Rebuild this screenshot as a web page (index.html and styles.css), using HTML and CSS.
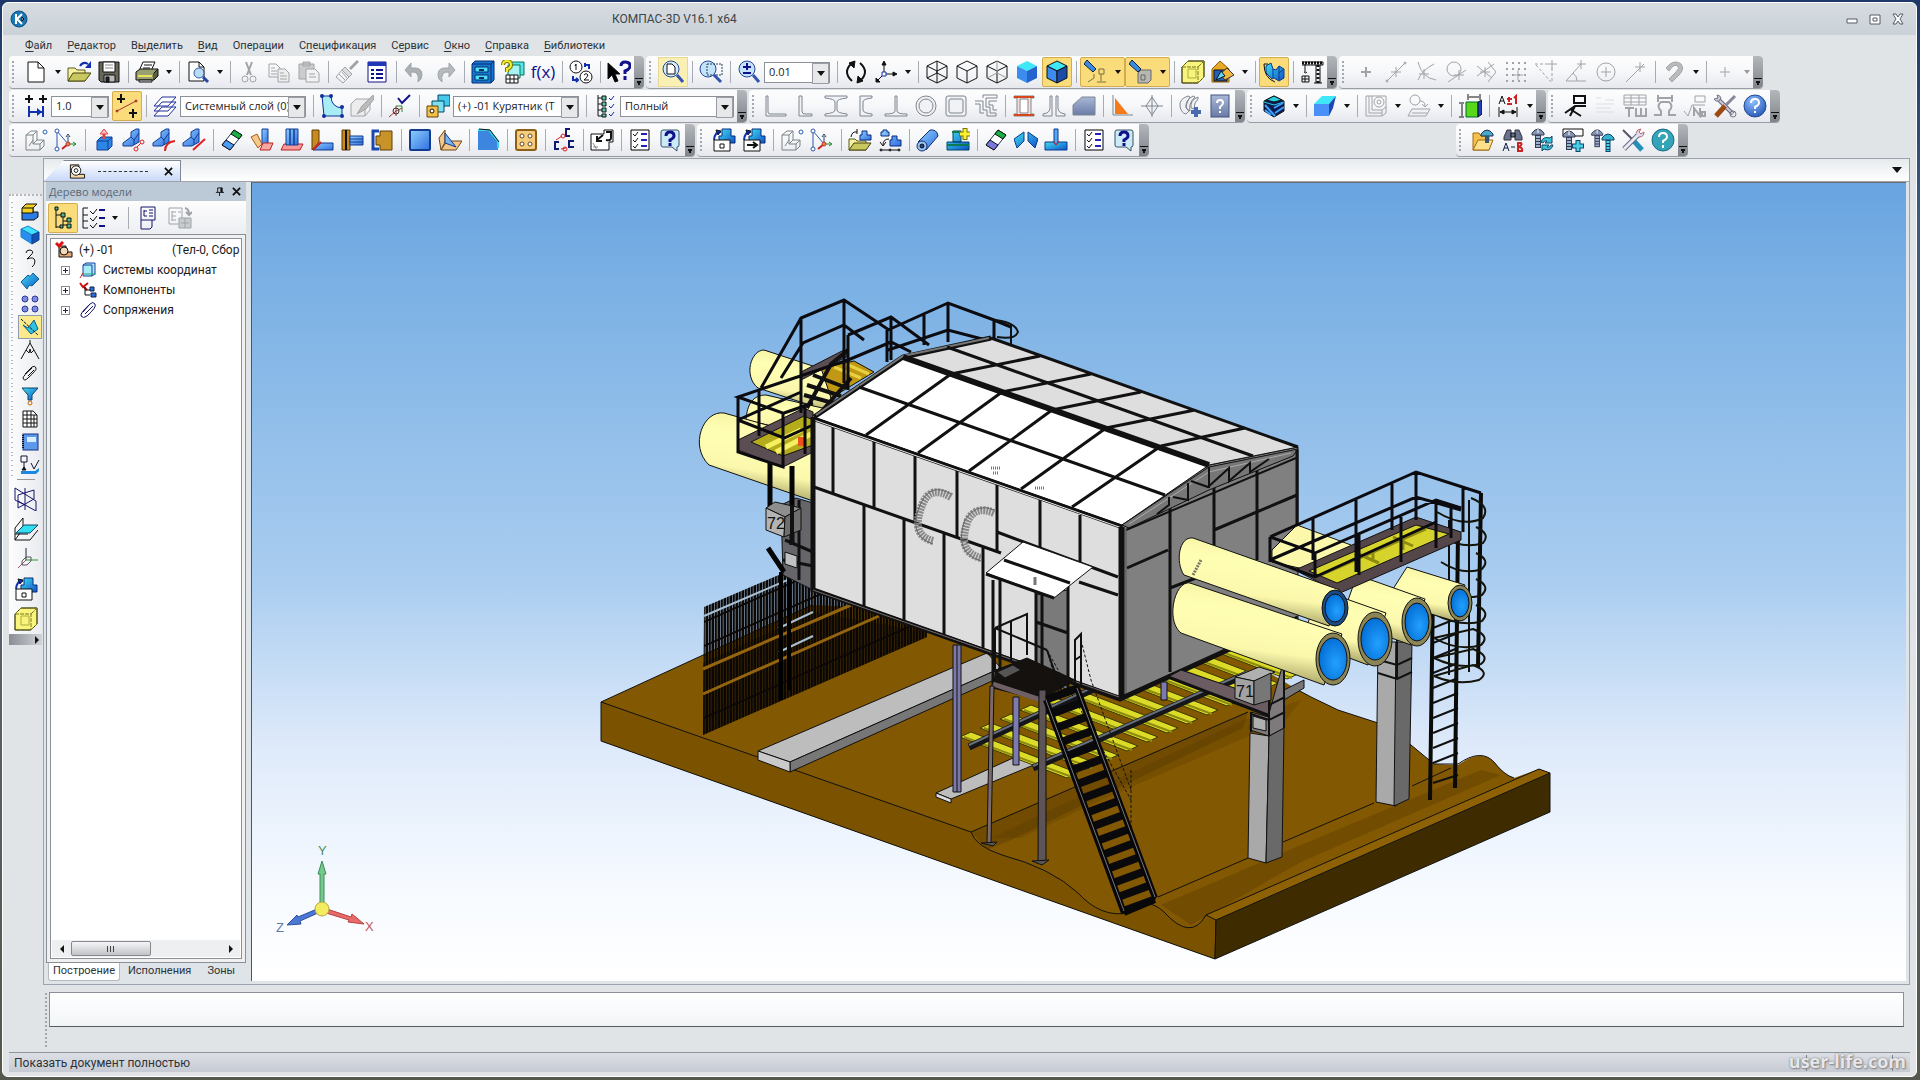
FILE: index.html
```html
<!DOCTYPE html>
<html lang="ru">
<head>
    <meta charset="UTF-8">
    <meta name="viewport" content="width=device-width, initial-scale=1.0">
    <title>КОМПАС-3D V16.1 x64</title>
    <link rel="stylesheet" href="styles.css">
</head>
<body>

<!-- общие градиенты и повторяющиеся значки -->
<svg class="defs" width="0" height="0" aria-hidden="true">
    <defs>
        <linearGradient id="blue" x1="0" y1="0" x2="1" y2="1"><stop offset="0" stop-color="#8fd0ff"/><stop offset="1" stop-color="#2f6fe0"/></linearGradient>
        <linearGradient id="cyan" x1="0" y1="0" x2="1" y2="1"><stop offset="0" stop-color="#3fe0f0"/><stop offset="1" stop-color="#1050c8"/></linearGradient>
        <linearGradient id="steel" x1="0" y1="0" x2="0" y2="1"><stop offset="0" stop-color="#a9b8d8"/><stop offset="1" stop-color="#6a7ba6"/></linearGradient>
        <radialGradient id="ball" cx=".4" cy=".3" r=".8"><stop offset="0" stop-color="#8cc0ff"/><stop offset="1" stop-color="#2050b0"/></radialGradient>
        <linearGradient id="pipe" x1="0.6" y1="0" x2="0.38" y2="1"><stop offset="0" stop-color="#f4f0a0"/><stop offset=".3" stop-color="#ffffb4"/><stop offset=".65" stop-color="#fbf8ac"/><stop offset="1" stop-color="#8f8a50"/></linearGradient>
        <radialGradient id="bore" cx=".6" cy=".6" r=".7"><stop offset="0" stop-color="#22a0ff"/><stop offset="1" stop-color="#0068d0"/></radialGradient>
        <pattern id="pickets" width="6" height="24" patternUnits="userSpaceOnUse" patternTransform="skewY(-24)"><path d="M1 0V24" stroke="#0b0704" stroke-width="2"/><path d="M4 0V24" stroke="#0b0704" stroke-width="3"/><path d="M0 23H6" stroke="#0b0704" stroke-width="2"/></pattern>
        <symbol id="i-plan" viewBox="0 0 24 24"><path d="M2 7L7 3H13V12H20V18L16 22H2ZM2 7H9V16H16V22M9 7L13 3M9 16L13 12M16 16L20 12M5 18L9 12" stroke="#7d8388"/><circle cx="21" cy="4" r="2" stroke="#2b62b8"/></symbol>
        <symbol id="i-axes3" viewBox="0 0 24 24"><path d="M3 3L14 16M3 4V21" stroke="#3158b0"/><circle cx="3" cy="3" r="2" fill="#fff" stroke="#3158b0"/><circle cx="3" cy="21" r="2" fill="#fff" stroke="#3158b0"/><path d="M14 16V8M12 9L14 6L16 9" stroke="#246"/><path d="M14 16L8 21" stroke="#c22" stroke-width="2"/><path d="M14 16H21M19 14L22 16L19 18" stroke="#1a8a2a"/><circle cx="14" cy="16" r="2" fill="#f0882a" stroke="#b34"/></symbol>
        <symbol id="i-list" viewBox="0 0 24 24"><path d="M3 2H21V22H3Z" fill="#fff" stroke="#000"/><path d="M5 6L7 8L10 4M5 12L7 14L10 10M5 18L7 20L10 16"/><path d="M13 6H19M13 12H19M13 18H19" stroke="#2222b8" stroke-width="2"/></symbol>
        <symbol id="i-hint" viewBox="0 0 24 24"><path d="M3 4Q3 2 5 2H19Q21 2 21 4V17Q21 19 19 19V23L14 19H5Q3 19 3 17Z" fill="#cdeaf8" stroke="#356"/><path d="M8 8Q8 4 12 4Q16 4 16 8Q16 10 12 12V14" stroke="#10108a" stroke-width="3"/><path d="M12 15V18" stroke="#10108a" stroke-width="3"/></symbol>
        <symbol id="i-bolt" viewBox="0 0 24 24"><path d="M4 7Q10 -1 16 7V9H4Z" fill="#8492b0" stroke="#333a55"/><path d="M10 3V7" stroke="#fff"/><path d="M10 9V22" stroke="#333a55" stroke-width="6"/><path d="M10 10V21" stroke="#9fb0cc" stroke-width="4" stroke-dasharray="2 1"/></symbol>
        <symbol id="i-solid" viewBox="0 0 24 24"><path d="M2 12Q3 3 9 4" stroke="#1030b0" stroke-width="2"/><path d="M4 2L9 3L6 7Z" fill="#1030b0"/><path d="M10 1H19V8H23V15H7V8H10Z" fill="url(#cyan)" stroke="#0a2a80"/><path d="M2 12H18V23H2Z" fill="#fff"/></symbol>
        <symbol id="i-pane" viewBox="0 0 24 24"><path d="M1 7L7 1H23V17L17 23H1Z" fill="#f8f47c"/><path d="M1 7L7 1H23V17L17 23H1ZM1 7H17V23M17 7L23 1" stroke="#77771c" stroke-dasharray="4 1"/><path d="M7 9V18H15V9Z" stroke="#b0ac40"/></symbol>
        <symbol id="i-help" viewBox="0 0 24 24"><circle cx="12" cy="12" r="11" fill="url(#ball)" stroke="#234a94"/><path d="M8 9Q8 5 12 5Q16 5 16 9Q16 11 12 13V15" stroke="#fff" stroke-width="2"/><path d="M12 17V19" stroke="#fff" stroke-width="2"/></symbol>
        <symbol id="i-wire" viewBox="0 0 24 24"><path d="M12 1L22 6V18L12 23L2 18V6ZM2 6L12 11L22 6M12 11V23"/></symbol>
        <g id="slat"><path d="M0 0L107 41L118 36L11 -5Z" fill="#dcdc28" stroke="#3a3800"/><path d="M4 0L112 40" stroke="#8c8a10" stroke-width="2"/></g>
    </defs>
</svg>

<div class="window">
    <header class="titlebar">
        <svg class="logo" viewBox="0 0 18 18"><circle cx="9" cy="9" r="8" fill="#1c78b4" stroke="#0d4f80"/><path d="M6 4V14M12 4L7 9L12 14" stroke="#fff" stroke-width="2"/><path d="M12 7L14 9L12 11Z" fill="#fff"/></svg>
        <h1>КОМПАС-3D V16.1 x64</h1>
        <div class="window-buttons">
            <button aria-label="Свернуть"><svg viewBox="0 0 12 12"><path d="M1 6H11V10H1Z" fill="#fff"/></svg></button>
            <button aria-label="Развернуть"><svg viewBox="0 0 12 12"><path d="M1 2H11V11H1Z" fill="#fff"/><path d="M4 5H8V8H4Z"/></svg></button>
            <button aria-label="Закрыть"><svg viewBox="0 0 12 12"><path d="M1 1H4L6 4L8 1H11L8 6L11 11H8L6 8L4 11H1L4 6Z" fill="#fff"/></svg></button>
        </div>
    </header>

    <nav class="menu">
        <a href="#"><u>Ф</u>айл</a>
        <a href="#"><u>Р</u>едактор</a>
        <a href="#">В<u>ы</u>делить</a>
        <a href="#"><u>В</u>ид</a>
        <a href="#">Опера<u>ц</u>ии</a>
        <a href="#">С<u>п</u>ецификация</a>
        <a href="#">С<u>е</u>рвис</a>
        <a href="#"><u>О</u>кно</a>
        <a href="#"><u>С</u>правка</a>
        <a href="#"><u>Б</u>иблиотеки</a>
    </nav>

    <!-- ряд 1 -->
    <div class="toolbar-row">
        <div class="toolbar">
            <i class="grip"></i>
            <button class="tool" aria-label="Создать"><svg viewBox="0 0 24 24"><path d="M4 2H14L20 8V22H4Z" fill="#fff"/><path d="M14 2V8H20"/></svg></button><button class="caret" aria-label="Список"></button>
            <button class="tool" aria-label="Открыть"><svg viewBox="0 0 24 24"><path d="M1 8H8L10 10H18V21H1Z" fill="#f4f2a0" stroke="#5a5a18"/><path d="M1 21L6 13H24L18 21Z" fill="#c9c860" stroke="#44440c"/><path d="M13 6Q16 1 21 4" stroke="#1030b0" stroke-width="2"/><path d="M24 1V8H18Z" fill="#1030b0" stroke="none"/></svg></button>
            <button class="tool" aria-label="Сохранить"><svg viewBox="0 0 24 24"><path d="M2 2H22V22H4L2 20Z" fill="#66665a"/><path d="M6 2H18V12H6Z" fill="#fff"/><path d="M8 5H16M8 8H16" stroke="#888"/><path d="M7 15H18V22H7Z" fill="#bbb"/><path d="M9 17H12V22H9Z" fill="#222"/></svg></button>
            <i class="sep"></i>
            <button class="tool" aria-label="Печать"><svg viewBox="0 0 24 24"><path d="M8 2H20L16 11H4Z" fill="#fff"/><path d="M9 5H17M8 8H15"/><path d="M1 12L5 9H23L19 13V20H1Z" fill="#9a9f72"/><path d="M19 13L23 9V16L19 20" fill="#5c6040"/><path d="M3 16H17" stroke="#e8e460" stroke-width="2"/><path d="M4 20H17V22H4Z" fill="#ddd"/></svg></button><button class="caret" aria-label="Список"></button>
            <i class="sep"></i>
            <button class="tool" aria-label="Просмотр"><svg viewBox="0 0 24 24"><path d="M3 2H13L18 7V21H3Z" fill="#fff"/><path d="M13 2V7H18"/><circle cx="13" cy="13" r="5" fill="#b8dcf8" stroke="#345a9c"/><path d="M17 17L22 22" stroke="#2848a0" stroke-width="3"/></svg></button><button class="caret" aria-label="Список"></button>
            <i class="sep"></i>
            <button class="tool off" aria-label="Вырезать"><svg viewBox="0 0 24 24"><path d="M9 2L14 15M15 2L10 15" stroke-width="2"/><circle cx="8" cy="19" r="3"/><circle cx="16" cy="19" r="3"/></svg></button>
            <button class="tool off" aria-label="Копировать"><svg viewBox="0 0 24 24"><path d="M2 4H9L13 8V17H2ZM4 8H8M4 11H10M4 14H10"/><path d="M11 9H18L22 13V22H11Z" fill="#eee"/><path d="M13 13H17M13 16H20M13 19H20"/></svg></button>
            <button class="tool off" aria-label="Вставить"><svg viewBox="0 0 24 24"><path d="M2 4H17V19H2ZM6 2H13V6H6Z" fill="#ccc"/><path d="M9 9H18L22 13V22H9Z" fill="#f2f2f2"/><path d="M12 14H18M12 17H19"/></svg></button>
            <i class="sep"></i>
            <button class="tool off" aria-label="Копировать свойства"><svg viewBox="0 0 24 24"><path d="M23 1L15 9" stroke-width="3"/><path d="M10 7L17 14L14 17L7 10Z" fill="#ddd"/><path d="M7 10L1 17L8 23L14 17M4 14L10 20M7 12L12 18"/></svg></button>
            <button class="tool" aria-label="Свойства"><svg viewBox="0 0 24 24"><path d="M3 2H21V22H3Z" fill="#fff" stroke="#10108a"/><path d="M3 4H21" stroke="#2038b8" stroke-width="4"/><path d="M6 10H9M6 14H9M6 18H9M11 10H18M11 14H18M11 18H18" stroke="#10108a" stroke-width="2"/></svg></button>
            <i class="sep"></i>
            <button class="tool off" aria-label="Отменить"><svg viewBox="0 0 24 24"><path d="M8 8H12Q19 8 19 15Q19 19 15 22Q17 11 8 12V17L2 10L8 3Z" fill="#aab0b4"/></svg></button>
            <button class="tool off" aria-label="Повторить"><svg viewBox="0 0 24 24"><path d="M16 8H12Q5 8 5 15Q5 19 9 22Q7 11 16 12V17L22 10L16 3Z" fill="#b4babe"/></svg></button>
            <i class="sep"></i>
            <button class="tool" aria-label="Менеджер библиотек"><svg viewBox="0 0 24 24"><path d="M1 4L4 1H23V20L20 23H1Z" fill="#1478d0" stroke="#0a2a70"/><path d="M1 4H20V23M20 4L23 1" stroke="#0a2a70"/><path d="M4 7H17V12H4ZM4 15H17V20H4Z" fill="#4fe0f4" stroke="#062c6c"/><path d="M8 10H13M8 18H13" stroke="#062c6c" stroke-width="2"/></svg></button>
            <button class="tool" aria-label="Менеджер документа"><svg viewBox="0 0 24 24"><path d="M10 2H23V15H10Z" fill="#56e4ea" stroke="#075"/><path d="M7 5H19V18H7Z" fill="#a8f4f4" stroke="#075"/><path d="M2 5Q2 1 6 1Q10 1 10 5Q10 8 6 9V12" stroke="#7a7400" stroke-width="4"/><path d="M2 5Q2 1 6 1Q10 1 10 5Q10 8 6 9V12" stroke="#f4ec30" stroke-width="2"/><path d="M5 15H17V23H5ZM5 19H17M9 15V23M13 15V23" fill="#fff"/></svg></button>
            <button class="tool" aria-label="Переменные"><span class="fx">f(x)</span></button>
            <i class="sep"></i>
            <button class="tool" aria-label="Перестроить"><svg viewBox="0 0 24 24"><circle cx="7" cy="7" r="6" fill="#fff"/><circle cx="17" cy="17" r="6" fill="#fff"/><path d="M6 6L7 4V10M15 15Q17 12 19 15Q18 18 15 20H20"/><path d="M16 5H20V9M16 3V7M4 16V20H9M7 18L9 20L7 22" stroke="#1030b0" stroke-width="2"/></svg></button>
            <i class="sep"></i>
            <button class="tool" aria-label="Что это такое"><svg viewBox="0 0 24 24"><path d="M1 3V19L5 15L8 22L11 21L8 14H13Z" fill="#000"/><path d="M14 6Q14 2 18 2Q23 2 23 6Q23 9 18 11V14" stroke="#10108a" stroke-width="3"/><path d="M18 16V20" stroke="#10108a" stroke-width="3"/></svg></button>
            <button class="cap" aria-label="Параметры панели"></button>
        </div>
        <div class="toolbar">
            <i class="grip"></i>
            <button class="tool hover" aria-label="Показать все"><svg viewBox="0 0 24 24"><circle cx="10" cy="9" r="8" fill="#d4ecfa" stroke="#24489a"/><path d="M6 4H11L14 7V14H6Z" fill="#fff"/><path d="M16 15L22 22" stroke="#3054b0" stroke-width="3"/></svg></button>
            <i class="sep"></i>
            <button class="tool" aria-label="Увеличить рамкой"><svg viewBox="0 0 24 24"><circle cx="9" cy="9" r="8" fill="#c4e2fa" stroke="#24489a"/><path d="M8 4H23V15H8Z" stroke="#245" stroke-dasharray="2 1"/><path d="M15 15L22 22" stroke="#3054b0" stroke-width="3"/></svg></button>
            <i class="sep"></i>
            <button class="tool" aria-label="Масштаб"><svg viewBox="0 0 24 24"><circle cx="10" cy="9" r="8" fill="#c4e2fa" stroke="#24489a"/><path d="M6 7H14M10 3V10M6 13H14" stroke="#10108a" stroke-width="2"/><path d="M16 15L22 22" stroke="#3054b0" stroke-width="3"/></svg></button>
            <span class="combo combo-scale"><select aria-label="Текущий масштаб"><option>0.01</option></select></span>
            <i class="sep"></i>
            <button class="tool" aria-label="Повернуть"><svg viewBox="0 0 24 24"><path d="M8 21Q-2 12 8 3M16 3Q26 12 16 21" stroke-width="2"/><path d="M5 3L11 1L10 8ZM19 21L13 23L14 16Z" fill="#111"/></svg></button>
            <button class="tool" aria-label="Ориентация"><svg viewBox="0 0 24 24"><path d="M10 12V2M10 14L2 22M12 14H22"/><path d="M8 5L10 1L12 5ZM19 12L23 14L19 16ZM2 18V22H6Z" fill="#111"/><path d="M8 12H12V16H8Z" fill="#fff" stroke="#1030b0"/></svg></button><button class="caret" aria-label="Список"></button>
            <i class="sep"></i>
            <button class="tool" aria-label="Каркас"><svg viewBox="0 0 24 24"><use href="#i-wire"/><path d="M12 1V13L2 18M12 13L22 18"/></svg></button>
            <button class="tool" aria-label="Без невидимых линий"><svg viewBox="0 0 24 24"><use href="#i-wire"/></svg></button>
            <button class="tool" aria-label="Невидимые линии тонкие"><svg viewBox="0 0 24 24"><use href="#i-wire"/><path d="M12 1V13L2 18M12 13L22 18" stroke="#999"/></svg></button>
            <button class="tool" aria-label="Полутоновое"><svg viewBox="0 0 24 24"><path d="M2 6L12 1L22 6L12 11Z" fill="#3fe8f8" stroke="none"/><path d="M2 6L12 11V23L2 18Z" fill="#3c8cf0" stroke="none"/><path d="M22 6L12 11V23L22 18Z" fill="#2464cc" stroke="none"/></svg></button>
            <button class="tool on" aria-label="Полутоновое с каркасом"><svg viewBox="0 0 24 24"><path d="M2 6L12 1L22 6L12 11Z" fill="#3fe8f8"/><path d="M2 6L12 11V23L2 18Z" fill="#3c8cf0"/><path d="M22 6L12 11V23L22 18Z" fill="#1c4ca8"/></svg></button>
            <i class="sep"></i>
            <span class="pair on"><button class="tool" aria-label="Видимость"><svg viewBox="0 0 24 24"><path d="M3 0L12 9L9 12L0 4Z" fill="#3a8ae0" stroke="#124"/><path d="M15 9H20V14H15ZM17 14V21M13 22H22M10 14V18L4 22" stroke="#777040"/></svg></button><button class="caret" aria-label="Список"></button></span>
            <span class="pair on"><button class="tool" aria-label="Упрощения"><svg viewBox="0 0 24 24"><path d="M3 0L12 9L9 12L0 4Z" fill="#3a8ae0" stroke="#124"/><path d="M9 13L12 10H22V20L19 23H9Z" fill="#b8b8b0" stroke="#666"/><path d="M12 15H16V20H12Z" stroke="#666"/></svg></button><button class="caret" aria-label="Список"></button></span>
            <i class="sep"></i>
            <button class="tool" aria-label="Скрыть"><svg viewBox="0 0 24 24"><use href="#i-pane"/></svg></button>
            <button class="tool" aria-label="Сечение"><svg viewBox="0 0 24 24"><path d="M1 9L9 1L18 9V22H1Z" fill="#e8a828" stroke="#8a5c08"/><path d="M3 10H16V21H3Z" fill="#2460c0"/><path d="M16 8L23 15L14 20L9 14Z" fill="#f0b840" stroke="#333"/><path d="M5 20L10 11L14 16Z" fill="#5fd8f0"/></svg></button><button class="caret" aria-label="Список"></button>
            <i class="sep"></i>
            <button class="tool on" aria-label="Перестроение"><svg viewBox="0 0 24 24"><path d="M4 6L9 3L11 9L14 10L17 6L22 9V18L17 21L12 18L10 19L4 13Z" fill="url(#cyan)" stroke="#0a3a90"/><path d="M11 9V18M17 6V13L22 9M17 13V20" stroke="#0a3a90"/><path d="M2 4Q2 18 13 22M2 4H6"/></svg></button>
            <i class="sep"></i>
            <button class="tool" aria-label="Кран"><svg viewBox="0 0 24 24"><path d="M2 2H23V5H2M5 4V12M4 12Q6 14 7 12" /><path d="M2 3H23" stroke-width="3" stroke-dasharray="2 1"/><path d="M16 5V23M20 5V23M14 23H22"/><path d="M18 5V23" stroke-width="3" stroke-dasharray="2 2"/><path d="M2 16H9V22H2ZM2 19H9M5 16V22"/></svg></button>
            <button class="cap" aria-label="Параметры панели"></button>
        </div>
        <div class="toolbar">
            <i class="grip"></i>
            <button class="tool off" aria-label="Ближайшая точка"><svg viewBox="0 0 24 24"><path d="M12 7V17M7 12H17" stroke-width="2"/></svg></button>
            <button class="tool off" aria-label="Середина"><svg viewBox="0 0 24 24"><path d="M2 22L22 2M12 7V17M7 12H17"/><circle cx="21" cy="3" r="1"/><circle cx="3" cy="21" r="1"/></svg></button>
            <button class="tool off" aria-label="Пересечение"><svg viewBox="0 0 24 24"><path d="M4 2Q8 18 22 20M20 4Q8 10 4 20M10 9V19M5 14H15"/></svg></button>
            <button class="tool off" aria-label="Касание"><svg viewBox="0 0 24 24"><circle cx="10" cy="9" r="7"/><path d="M4 22L22 10M15 10V20M10 15H20"/></svg></button>
            <button class="tool off" aria-label="Нормаль"><svg viewBox="0 0 24 24"><path d="M3 6L18 18M3 16L20 4M14 2L22 12L14 22M11 7V17M6 12H16"/></svg></button>
            <button class="tool off" aria-label="По сетке"><svg viewBox="0 0 24 24"><path d="M2 3H23M2 9H23M2 15H23M2 21H23" stroke-width="2" stroke-dasharray="2 4"/><path d="M14 10V20M9 15H19"/></svg></button>
            <button class="tool off" aria-label="Выравнивание"><svg viewBox="0 0 24 24"><path d="M1 4H13M18 8V22M2 5L17 22" stroke-dasharray="3 2"/><path d="M18 0V9M13 4H23"/></svg></button>
            <button class="tool off" aria-label="Угловая"><svg viewBox="0 0 24 24"><path d="M2 21H22M2 21L17 4M9 13Q13 16 13 21M17 0V9M13 4H22"/></svg></button>
            <button class="tool off" aria-label="Центр"><svg viewBox="0 0 24 24"><circle cx="12" cy="12" r="9"/><path d="M12 7V17M7 12H17"/></svg></button>
            <button class="tool off" aria-label="Точка на кривой"><svg viewBox="0 0 24 24"><path d="M2 22L20 4M16 2V12M11 7H21"/></svg></button>
            <i class="sep"></i>
            <button class="tool off" aria-label="Привязки"><svg viewBox="0 0 24 24"><path d="M4 8L8 4Q14 0 19 4Q23 9 17 15L10 22L7 19L14 12Q18 8 16 6Q13 4 10 7L7 11Z" fill="#bbb"/></svg></button><button class="caret" aria-label="Список"></button>
            <i class="sep"></i>
            <button class="tool off" aria-label="Точка"><svg viewBox="0 0 24 24"><path d="M12 7V17M7 12H17"/></svg></button><button class="caret off" aria-label="Список"></button>
            <button class="cap" aria-label="Параметры панели"></button>
        </div>
    </div>

    <!-- ряд 2 -->
    <div class="toolbar-row">
        <div class="toolbar">
            <i class="grip"></i>
            <button class="tool" aria-label="Шаг курсора"><svg viewBox="0 0 24 24"><path d="M5 1V9M1 5H9M19 1V9M15 5H23" stroke-width="2"/><path d="M5 12V23M19 12V23M5 18H18" stroke="#1030b0" stroke-width="2"/><path d="M13 14L18 18L13 22Z" fill="#1030b0" stroke="none"/></svg></button>
            <span class="combo combo-step"><select aria-label="Шаг"><option>1.0</option></select></span>
            <button class="tool on" aria-label="Запретить привязки"><svg viewBox="0 0 24 24"><path d="M6 0V9M2 5H10M18 15V24M14 19H22" stroke-width="2"/><path d="M2 17L21 7" stroke="#a33"/><circle cx="2" cy="17" r="1" fill="#a33" stroke="#a33"/><circle cx="21" cy="7" r="1" fill="#a33" stroke="#a33"/></svg></button>
            <i class="sep"></i>
            <button class="tool" aria-label="Слои"><svg viewBox="0 0 24 24"><path d="M1 22L9 13H23L15 22ZM1 17L9 8H23L15 17ZM1 12L9 3H23L15 12Z" fill="#fff" stroke="#1c2e98"/></svg></button>
            <span class="combo combo-layer"><select aria-label="Слой"><option>Системный слой (0)</option></select></span>
            <i class="sep"></i>
            <button class="tool" aria-label="Эскиз"><svg viewBox="0 0 24 24"><path d="M2 2H11Q11 13 22 14V22H4Z" fill="#a8ecf4" stroke="#10309a"/><g fill="#10309a" stroke="none"><circle cx="2" cy="2" r="2"/><circle cx="11" cy="2" r="2"/><circle cx="22" cy="13" r="2"/><circle cx="22" cy="22" r="2"/><circle cx="4" cy="22" r="2"/></g></svg></button>
            <button class="tool off" aria-label="Редактировать"><svg viewBox="0 0 24 24"><path d="M1 10L6 5H20L15 10V22H1Z" fill="#ececec"/><path d="M20 5V16L15 22"/><path d="M23 1L12 12L7 20L16 15L24 5Z" fill="#bbb"/></svg></button>
            <i class="sep"></i>
            <button class="tool" aria-label="ЛСК"><svg viewBox="0 0 24 24"><path d="M8 12V22M8 17L1 23M8 17L14 14" stroke="#a33"/><path d="M8 12H14V18" stroke="#2a8a2a"/><circle cx="8" cy="17" r="3" stroke="#333"/><path d="M10 4L14 9L22 1" stroke="#10108a" stroke-width="2"/></svg></button>
            <i class="sep"></i>
            <button class="tool" aria-label="Исполнение"><svg viewBox="0 0 24 24"><path d="M12 1H24V12H12Z" fill="#46c8ea" stroke="#046"/><path d="M6 7H18V18H6Z" fill="#7ce0f0" stroke="#046"/><path d="M1 12H12V23H1Z" fill="#f4c04a" stroke="#640"/><circle cx="6" cy="17" r="2" fill="#fff"/></svg></button>
            <span class="combo combo-part"><select aria-label="Исполнение"><option>(+) -01 Курятник (Т</option></select></span>
            <i class="sep"></i>
            <button class="tool" aria-label="Состав"><svg viewBox="0 0 24 24"><path d="M5 1V22M5 4H9M5 10H9M5 16H9M5 22H9"/><path d="M9 2H13V6H9ZM9 8H13V12H9ZM9 14H13V18H9ZM9 20H13V23H9Z" fill="#58c8b0"/><path d="M16 4L18 6L21 2M16 20L18 22L21 18M16 12L18 14L21 10" stroke="#1030b0"/></svg></button>
            <span class="combo combo-full"><select aria-label="Состояние"><option>Полный</option></select></span>
            <button class="cap" aria-label="Параметры панели"></button>
        </div>
        <div class="toolbar">
            <i class="grip"></i>
            <button class="tool dim" aria-label="Уголок"><svg viewBox="0 0 24 24"><path d="M2 2H4V18Q4 20 6 20H22V22H2Z"/></svg></button>
            <button class="tool dim" aria-label="Уголок неравный"><svg viewBox="0 0 24 24"><path d="M5 2H8V17Q8 20 11 20H18V22H5Z"/></svg></button>
            <button class="tool dim" aria-label="Двутавр"><svg viewBox="0 0 24 24"><path d="M1 2H23V4Q13 5 13 8V16Q13 19 23 20V22H1V20Q11 19 11 16V8Q11 5 1 4Z"/></svg></button>
            <button class="tool dim" aria-label="Швеллер"><svg viewBox="0 0 24 24"><path d="M18 2H6V22H18V20Q9 19 9 16V8Q9 5 18 4Z"/></svg></button>
            <button class="tool dim" aria-label="Тавр"><svg viewBox="0 0 24 24"><path d="M11 2H13V17Q13 20 23 20V22H1V20Q11 20 11 17Z"/></svg></button>
            <button class="tool dim" aria-label="Труба"><svg viewBox="0 0 24 24"><circle cx="12" cy="12" r="10"/><circle cx="12" cy="12" r="7"/></svg></button>
            <button class="tool dim" aria-label="Профиль"><svg viewBox="0 0 24 24"><rect x="2" y="2" width="20" height="20" rx="2"/><rect x="5" y="5" width="14" height="14" rx="2"/></svg></button>
            <button class="tool dim" aria-label="Гнутый профиль"><svg viewBox="0 0 24 24"><path d="M1 7H9V16H13V22H22V19H16V13H12V4H23V1H9V4" fill="none"/><path d="M1 10H6V19H10M23 7H15V11H19V16H23" fill="none"/></svg></button>
            <i class="sep"></i>
            <button class="tool dim" aria-label="Балка"><svg viewBox="0 0 24 24"><path d="M2 2H22V4H19V20H22V22H2V20H5V4H2Z" fill="#f8e0d8"/><path d="M2 3H22M2 21H22" stroke="#d8461c" stroke-width="2"/><path d="M8 5V19H16V5Z" fill="#fff"/></svg></button>
            <button class="tool dim" aria-label="Опора"><svg viewBox="0 0 24 24"><path d="M8 2H10V22H1V20Q8 19 8 14ZM16 2H14V22H23V20Q16 19 16 14Z"/></svg></button>
            <button class="tool dim" aria-label="Пластина"><svg viewBox="0 0 24 24"><path d="M10 3H23V21H1V11Z" fill="url(#steel)"/></svg></button>
            <i class="sep"></i>
            <button class="tool dim" aria-label="Косынка"><svg viewBox="0 0 24 24"><path d="M3 1V21H23" fill="none"/><path d="M5 4L18 20H5Z" fill="#f47a1c" stroke="none"/></svg></button>
            <button class="tool dim" aria-label="Узел"><svg viewBox="0 0 24 24"><path d="M12 1V23M1 12H23M12 3L18 12L12 21L6 12Z"/></svg></button>
            <i class="sep"></i>
            <button class="tool dim" aria-label="Добавить канат"><svg viewBox="0 0 24 24"><path d="M10 2Q1 5 2 12Q3 19 8 20L11 17Q5 14 12 3ZM15 2Q7 6 8 14L12 17Q10 10 17 3ZM20 3Q12 6 13 14L16 15Q16 8 20 5Z"/><path d="M18 13V23M13 18H23" stroke="#4a6cae" stroke-width="4"/></svg></button>
            <button class="tool dim" aria-label="Справка по профилям"><svg viewBox="0 0 24 24"><rect x="3" y="1" width="18" height="22" fill="url(#steel)" stroke="#46557c"/><path d="M9 9Q9 6 12 6Q15 6 15 9Q15 11 12 13V15M12 17V19" fill="none" stroke="#fff" stroke-width="2"/></svg></button>
            <button class="cap" aria-label="Параметры панели"></button>
        </div>
        <div class="toolbar">
            <i class="grip"></i>
            <button class="tool" aria-label="Оболочка"><svg viewBox="0 0 24 24"><path d="M2 7L12 2L22 7V17L12 23L2 17Z" fill="#0c1c50"/><path d="M4 6L12 2L20 6L12 8Z" fill="#28d0e0"/><path d="M2 8L12 11L22 8" stroke="#28d0e0"/><path d="M3 11L13 22M3 16L9 21M12 14L21 9M13 19L22 13" stroke="#3fa0ff" stroke-width="2"/></svg></button><button class="caret" aria-label="Список"></button>
            <i class="sep"></i>
            <button class="tool" aria-label="Тело"><svg viewBox="0 0 24 24"><path d="M1 10L9 2H23L16 10Z" fill="#3fe8f8" stroke="none"/><path d="M1 10H16V22H1Z" fill="#4a90f8" stroke="none"/><path d="M16 10L23 2L20 14L16 22Z" fill="#1c48b0" stroke="none"/></svg></button><button class="caret" aria-label="Список"></button>
            <i class="sep"></i>
            <button class="tool off" aria-label="Операция"><svg viewBox="0 0 24 24"><path d="M2 2H8V16H18V22H2ZM8 2H22V14M5 2V19H18M18 16L22 13V19L18 22"/><circle cx="15" cy="8" r="5"/><circle cx="15" cy="8" r="2"/></svg></button><button class="caret" aria-label="Список"></button>
            <button class="tool off" aria-label="Отверстие"><svg viewBox="0 0 24 24"><circle cx="8" cy="6" r="5"/><path d="M13 7Q18 7 18 12M15 10L18 13L21 10M1 22L5 15H23L19 22ZM5 19H20"/></svg></button><button class="caret" aria-label="Список"></button>
            <i class="sep"></i>
            <button class="tool" aria-label="Габарит"><svg viewBox="0 0 24 24"><path d="M8 8H20V23H8Z" fill="#58d818" stroke="#063"/><path d="M20 8L24 6V20L20 23Z" fill="#2040c0"/><path d="M10 0V6M22 0V6M11 3H21M1 9H6M1 23H6M4 10V22"/></svg></button>
            <i class="sep"></i>
            <button class="tool" aria-label="Размер"><svg viewBox="0 0 24 24"><path d="M3 10L6 2L9 10M4 7H8M3 13V23M21 13V23M4 18H20"/><path d="M4 18L8 16V20ZM20 18L16 16V20Z" fill="#111"/><path d="M11 5H16M13 3V8M11 10H16M18 4L20 2V10" stroke="#c22" stroke-width="2"/></svg></button><button class="caret" aria-label="Список"></button>
            <button class="cap" aria-label="Параметры панели"></button>
        </div>
        <div class="toolbar">
            <i class="grip"></i>
            <button class="tool" aria-label="Выноска"><svg viewBox="0 0 24 24"><path d="M11 2H22V9H11ZM23 12H12L2 19M12 12L7 22M7 15L18 22" stroke-width="2"/></svg></button>
            <button class="tool ghost" aria-label="Технические требования"><svg viewBox="0 0 24 24"><path d="M3 4H8M3 10H21M3 14H18M3 18H21M12 6H21"/></svg></button>
            <button class="tool off" aria-label="Таблица"><svg viewBox="0 0 24 24"><path d="M1 1H23V11H1ZM1 4H23M1 8H23M8 1V11M16 1V11"/><path d="M2 14H11M6 14V23M13 14V22H23V14M18 14V22" stroke-width="2"/></svg></button>
            <button class="tool off" aria-label="Допуск"><svg viewBox="0 0 24 24"><path d="M5 4H19M5 1V8M19 1V8M1 21H8V17Q3 12 8 8H16Q21 12 16 17V21H23" stroke-width="2"/></svg></button>
            <button class="tool off" aria-label="Обозначение"><svg viewBox="0 0 24 24"><path d="M12 2H22V8H12ZM22 11H9L5 22L1 17"/><path d="M11 22V14L17 22V14M19 18H22V22H19Z" stroke-width="2"/></svg></button>
            <button class="tool" aria-label="Настройка"><svg viewBox="0 0 24 24"><path d="M4 4L20 20" stroke="#667" stroke-width="4"/><path d="M4 4L20 20" stroke="#ccd" stroke-width="2"/><path d="M1 5Q2 8 6 7L8 4Q7 1 4 1L5 4Z" fill="#ccd" stroke="#778"/><path d="M22 2L13 11" stroke="#889" stroke-width="3"/><path d="M12 12L3 22" stroke="#9c4a14" stroke-width="5"/><circle cx="20" cy="20" r="3" stroke="#778"/></svg></button>
            <button class="tool" aria-label="Справка"><svg viewBox="0 0 24 24"><use href="#i-help"/></svg></button>
            <button class="cap" aria-label="Параметры панели"></button>
        </div>
    </div>

    <!-- ряд 3 -->
    <div class="toolbar-row">
        <div class="toolbar">
            <i class="grip"></i>
            <button class="tool" aria-label="Каркас конструкции"><svg viewBox="0 0 24 24"><use href="#i-plan"/></svg></button>
            <button class="tool" aria-label="Система координат"><svg viewBox="0 0 24 24"><use href="#i-axes3"/></svg></button>
            <i class="sep"></i>
            <button class="tool" aria-label="Выдавить"><svg viewBox="0 0 24 24"><path d="M5 13L9 9H20V18L16 22H5Z" fill="#2c86e8" stroke="#123c90"/><path d="M5 13H16V22M16 13L20 9" stroke="#123c90"/><path d="M12 11V5" stroke="#d44" stroke-width="3"/><path d="M8 6L12 1L16 6Z" fill="#fbb" stroke="#d44"/></svg></button>
            <button class="tool" aria-label="По отрезку"><svg viewBox="0 0 24 24"><path d="M1 15L9 9V4L14 1H17V14L10 18H1Z" fill="url(#blue)" stroke="#123c90"/><path d="M9 9L12 12L17 5M12 12V17" stroke="#123c90"/><path d="M15 19L19 15" stroke="#d22"/><circle cx="14" cy="21" r="2" stroke="#d22"/><circle cx="20" cy="14" r="2" stroke="#d22"/></svg></button>
            <button class="tool" aria-label="По дуге"><svg viewBox="0 0 24 24"><path d="M1 15L9 9V4L14 1H17V14L10 18H1Z" fill="url(#blue)" stroke="#123c90"/><path d="M9 9L12 12L17 5M12 12V17" stroke="#123c90"/><path d="M13 23Q13 14 23 13" stroke="#d22" stroke-width="2"/></svg></button>
            <button class="tool" aria-label="По кривой"><svg viewBox="0 0 24 24"><path d="M1 15L9 9V4L14 1H17V14L10 18H1Z" fill="url(#blue)" stroke="#123c90"/><path d="M9 9L12 12L17 5M12 12V17" stroke="#123c90"/><path d="M11 22L23 11" stroke="#d22" stroke-width="2"/></svg></button>
            <i class="sep"></i>
            <button class="tool" aria-label="Обрезать"><svg viewBox="0 0 24 24"><path d="M2 17L14 2L22 7L10 22Z" fill="#fff" stroke="#235"/><path d="M11 6L14 2L22 7L19 11Z" fill="#18b040"/><path d="M2 17L6 12L14 17L10 22Z" fill="#4a9cf4"/></svg></button>
            <button class="tool" aria-label="Торец"><svg viewBox="0 0 24 24"><path d="M12 1H18V16H12Z" fill="url(#blue)" stroke="#123c90"/><path d="M1 9L7 6L12 16L8 20Z" fill="#f8c88a" stroke="#a55a18"/><path d="M10 22L13 15H23L20 22Z" fill="#f8a8a0" stroke="#b22"/></svg></button>
            <button class="tool" aria-label="Усечение"><svg viewBox="0 0 24 24"><path d="M1 22L4 16H23L20 22Z" fill="#f89898" stroke="#b22"/><path d="M6 1H10V17H6ZM10 1H14V17H10ZM14 1H18V17H14Z" fill="url(#blue)" stroke="#123c90"/></svg></button>
            <button class="tool" aria-label="Угловой стык"><svg viewBox="0 0 24 24"><path d="M2 2H9V14L2 22Z" fill="#c88a1c" stroke="#5e3c04"/><path d="M3 22L11 15H23V22Z" fill="url(#blue)" stroke="#123c90"/><path d="M3 22L11 14" stroke="#c22" stroke-width="2"/></svg></button>
            <button class="tool" aria-label="Т-стык"><svg viewBox="0 0 24 24"><path d="M2 2H10V22H2Z" fill="#c88a1c" stroke="#5e3c04"/><path d="M6 2V22" stroke-width="2"/><path d="M10 8H23V17H10Z" fill="url(#blue)" stroke="#123c90"/><path d="M10 11H23M10 14H23" stroke="#123c90"/></svg></button>
            <button class="tool" aria-label="Паз"><svg viewBox="0 0 24 24"><path d="M10 3H22V22H10V17H6V8H10Z" fill="#c8942a" stroke="#5e3c04"/><path d="M9 3H3V21H9" stroke="#1848b0" stroke-width="3"/></svg></button>
            <i class="sep"></i>
            <button class="tool" aria-label="Лист"><svg viewBox="0 0 24 24"><rect x="2" y="2" width="20" height="20" rx="1" fill="url(#blue)" stroke="#123c90" stroke-width="2"/></svg></button>
            <button class="tool" aria-label="Ребро"><svg viewBox="0 0 24 24"><path d="M1 10L7 2V14L3 22Z" fill="#f4c88a" stroke="#6e4612"/><path d="M3 22L9 13H24L18 22Z" fill="#f4c88a" stroke="#6e4612"/><path d="M7 5V15L18 19Z" fill="#7ab4ec" stroke="#123c90"/></svg></button>
            <i class="sep"></i>
            <button class="tool" aria-label="Фаска"><svg viewBox="0 0 24 24"><path d="M2 2H13L22 13V22H2Z" fill="#3c86e0" stroke="none"/><path d="M2 2H13L22 13V20" stroke="#38d8e8" stroke-width="2"/><path d="M3 1L14 2L23 14"/></svg></button>
            <i class="sep"></i>
            <button class="tool" aria-label="Отверстия"><svg viewBox="0 0 24 24"><rect x="2" y="2" width="20" height="20" rx="2" fill="#f4cc7e" stroke="#8e5e14" stroke-width="2"/><circle cx="8" cy="8" r="2" fill="#fff" stroke="#642"/><circle cx="16" cy="8" r="2" fill="#fff" stroke="#642"/><circle cx="8" cy="16" r="2" fill="#fff" stroke="#642"/><circle cx="16" cy="16" r="2" fill="#fff" stroke="#642"/></svg></button>
            <i class="sep"></i>
            <button class="tool" aria-label="Замена профиля"><svg viewBox="0 0 24 24"><path d="M18 1H14V8H18M7 14H3V21H7M22 13H17V19H22" stroke="#111a70" stroke-width="2"/><path d="M4 12L10 8M9 21L14 20" stroke="#d22"/><circle cx="11" cy="8" r="2" stroke="#d22"/><circle cx="13" cy="21" r="2" stroke="#d22"/></svg></button>
            <i class="sep"></i>
            <button class="tool" aria-label="Преобразовать"><svg viewBox="0 0 24 24"><path d="M1 6H14V2H23V14H19V22H1Z" fill="#fff"/><path d="M16 4H21V10Q21 13 16 12M13 7L7 12M7 8V13H12" stroke-width="2"/><path d="M3 15L7 22M3 19H8" stroke="#888"/></svg></button>
            <i class="sep"></i>
            <button class="tool" aria-label="Список элементов"><svg viewBox="0 0 24 24"><use href="#i-list"/></svg></button>
            <button class="tool" aria-label="Подсказка"><svg viewBox="0 0 24 24"><use href="#i-hint"/></svg></button>
            <button class="cap" aria-label="Параметры панели"></button>
        </div>
        <div class="toolbar">
            <i class="grip"></i>
            <button class="tool" aria-label="Деталь из тела"><svg viewBox="0 0 24 24"><use href="#i-solid"/><path d="M8 16H12V20H8Z"/></svg></button>
            <button class="tool" aria-label="Деталь со смещением"><svg viewBox="0 0 24 24"><use href="#i-solid"/><path d="M5 17H14M11 14L15 17L11 20" stroke-width="2"/></svg></button>
            <i class="sep"></i>
            <button class="tool" aria-label="Каркас трубопровода"><svg viewBox="0 0 24 24"><use href="#i-plan"/></svg></button>
            <button class="tool" aria-label="Оси"><svg viewBox="0 0 24 24"><use href="#i-axes3"/></svg></button>
            <i class="sep"></i>
            <button class="tool" aria-label="Библиотека труб"><svg viewBox="0 0 24 24"><path d="M1 11H7L9 13H18V22H1Z" fill="#f4f2a0" stroke="#5a5a18"/><path d="M1 22L6 15H23L18 22Z" fill="#c9c860" stroke="#44440c"/><path d="M14 3H19V7H23V12H12V7H14Z" fill="url(#blue)" stroke="#0a2a80"/><path d="M3 9Q4 3 9 4M9 1V6"/></svg></button>
            <button class="tool" aria-label="Фитинг"><svg viewBox="0 0 24 24"><path d="M5 2H9V4H11V8H3V4H5ZM14 8H19V12H23V18H12V12H14Z" fill="url(#blue)" stroke="#0a2a80"/><path d="M11 11Q5 11 5 17M2 14L5 18L8 14M2 22H22"/><circle cx="3" cy="22" r="1"/><circle cx="12" cy="22" r="1"/><circle cx="21" cy="22" r="1"/></svg></button>
            <i class="sep"></i>
            <button class="tool" aria-label="Труба"><svg viewBox="0 0 24 24"><path d="M2 14L14 2Q21 1 22 8L10 22Z" fill="url(#blue)" stroke="#122c70"/><ellipse cx="6" cy="18" rx="5" ry="5" fill="#9cc4f0" stroke="#122c70"/><ellipse cx="6" cy="18" rx="2" ry="2" fill="#1c4890"/></svg></button>
            <button class="tool" aria-label="Добавить деталь"><svg viewBox="0 0 24 24"><path d="M1 14H23V22H1ZM7 3H15V14H7Z" fill="url(#cyan)" stroke="#046"/><path d="M6 4H14M1 17H23" stroke="#0a7a50" stroke-width="2"/><path d="M19 0V12M13 6H24" stroke="#7a7400" stroke-width="5"/><path d="M19 1V11M14 6H24" stroke="#f8f030" stroke-width="3"/></svg></button>
            <i class="sep"></i>
            <button class="tool" aria-label="Отрезать трубу"><svg viewBox="0 0 24 24"><path d="M2 17L14 2L22 7L10 22Z" fill="#fff" stroke="#235"/><path d="M11 6L14 2L22 7L19 11Z" fill="#18b040"/><path d="M2 17L6 12L14 17L10 22Z" fill="#7a78e0"/></svg></button>
            <button class="tool" aria-label="Стык труб"><svg viewBox="0 0 24 24"><path d="M0 11L10 4V13L3 20ZM24 11L14 4V13L21 20Z" fill="url(#cyan)" stroke="#0a3a90"/></svg></button>
            <button class="tool" aria-label="Врезка"><svg viewBox="0 0 24 24"><path d="M1 14H23V22H1Z" fill="url(#cyan)" stroke="#0a3a90"/><path d="M10 1H14V14L12 17L10 14Z" fill="#58a8f4" stroke="#0a3a90"/><path d="M9 13L12 17L15 13" stroke="#c22"/></svg></button>
            <i class="sep"></i>
            <button class="tool" aria-label="Список деталей"><svg viewBox="0 0 24 24"><use href="#i-list"/></svg></button>
            <button class="tool" aria-label="Подсказка"><svg viewBox="0 0 24 24"><use href="#i-hint"/></svg></button>
            <button class="cap" aria-label="Параметры панели"></button>
        </div>
        <div class="toolbar toolbar-library">
            <i class="grip"></i>
            <button class="tool" aria-label="Открыть библиотеку"><svg viewBox="0 0 24 24"><path d="M2 5H8L10 8H18V22H2Z" fill="#f4c04a" stroke="#a06a10"/><path d="M2 22L7 12H22L18 22Z" fill="#fce08a" stroke="#a06a10"/><path d="M10 6Q16 -2 22 6V8H10Z" fill="#4aa8c8" stroke="#235"/><path d="M16 8V15" stroke="#357" stroke-width="4"/></svg></button>
            <button class="tool" aria-label="Найти и заменить"><svg viewBox="0 0 24 24"><path d="M6 2H10V12H3V9ZM14 2H18L21 9V12H14Z" fill="#68728c" stroke="#334"/><path d="M10 5H14V9H10Z" fill="#68728c"/><path d="M2 23L5 15L8 23M3 20H7M10 19H14" stroke="#124"/><path d="M17 15V23H21Q22 19 17 19Q22 17 20 15Z" stroke="#c22" stroke-width="2"/></svg></button>
            <button class="tool" aria-label="Обновить крепёж"><svg viewBox="0 0 24 24"><use href="#i-bolt" x="-3" y="-2" width="24" height="24"/><path d="M10 14Q12 8 19 10L21 8V15H14L16 13Q13 12 12 15ZM22 17Q20 24 13 21L11 23V17H18L16 19Q19 20 20 17Z" fill="#38c4d8" stroke="#146"/></svg></button>
            <button class="tool" aria-label="Добавить крепёж"><svg viewBox="0 0 24 24"><path d="M2 1H22V8H2Z"/><use href="#i-bolt" x="-2" y="0" width="24" height="24"/><path d="M17 12V24M11 18H23" stroke="#146" stroke-width="5"/><path d="M17 13V23M12 18H22" stroke="#48d0e8" stroke-width="3"/></svg></button>
            <button class="tool" aria-label="Пакет крепежа"><svg viewBox="0 0 24 24"><use href="#i-bolt" x="-3" y="-1" width="22" height="22"/><path d="M11 10Q17 2 23 10V12H11Z" fill="#38b0d0" stroke="#146"/><path d="M17 12V24" stroke="#146" stroke-width="5"/><path d="M17 13V23" stroke="#48d0e8" stroke-width="3" stroke-dasharray="2 1"/></svg></button>
            <button class="tool" aria-label="Настройки"><svg viewBox="0 0 24 24"><path d="M2 2L12 12" stroke="#556" stroke-width="2"/><path d="M12 12L21 22" stroke="#2490b8" stroke-width="5"/><path d="M19 5L3 21" stroke="#668" stroke-width="5"/><path d="M19 5L3 21" stroke="#e8ecf0" stroke-width="3"/><path d="M15 5Q16 1 20 1L18 4L20 6L23 4Q23 9 18 9" fill="#dde" stroke="#b66"/></svg></button>
            <button class="tool" aria-label="Справка"><svg viewBox="0 0 24 24"><circle cx="12" cy="12" r="11" fill="#34a4b8" stroke="#1a6c80"/><path d="M8 9Q8 5 12 5Q16 5 16 9Q16 11 12 13V15M12 17V20" stroke="#fff" stroke-width="2"/></svg></button>
            <button class="cap" aria-label="Параметры панели"></button>
        </div>
    </div>

    <div class="workspace">
        <!-- компактная панель -->
        <aside class="palette">
            <button class="pal" aria-label="Редактирование детали"><svg viewBox="0 0 20 20"><path d="M2 10H9L13 6V10H18V15L14 18H2Z" fill="#2c7ce8"/><path d="M2 6L6 2H17L13 6V11H2Z" fill="#f4d020"/><path d="M2 6H13"/></svg></button>
            <button class="pal" aria-label="Твердое тело"><svg viewBox="0 0 20 20"><path d="M1 4L8 1L19 7L12 10Z" fill="#3fe0f8" stroke="#18c"/><path d="M1 4L12 10V19L1 12Z" fill="#2c8cf0" stroke="#18c"/><path d="M12 10L19 7V15L12 19Z" fill="#1450b8" stroke="#148"/></svg></button>
            <button class="pal" aria-label="Кривые"><svg viewBox="0 0 20 20"><path d="M6 5Q6 2 10 2Q15 3 11 7L7 11Q14 8 15 13Q15 17 12 19"/></svg></button>
            <button class="pal" aria-label="Поверхности"><svg viewBox="0 0 20 20"><path d="M1 11L8 4Q10 7 13 2L19 8L12 15Q9 13 7 18Z" fill="url(#cyan)" stroke="#0c5c90"/></svg></button>
            <button class="pal" aria-label="Массивы"><svg viewBox="0 0 20 20"><g fill="#7c8ae0" stroke="#2c3a98"><circle cx="5" cy="5" r="3"/><circle cx="15" cy="5" r="3"/><circle cx="5" cy="15" r="3"/><circle cx="15" cy="15" r="3"/></g></svg></button>
            <button class="pal on" aria-label="Вспомогательная геометрия"><svg viewBox="0 0 20 20"><path d="M3 8L8 11L14 3L18 12L11 17Z" fill="#30c0e0" stroke="#0c5c90"/><path d="M1 2L18 18" stroke-dasharray="3 1"/></svg></button>
            <button class="pal" aria-label="Измерения"><svg viewBox="0 0 20 20"><path d="M10 0V3M10 3L1 19M10 3L19 19M6 10L9 13L10 9L11 13L14 10"/></svg></button>
            <button class="pal" aria-label="Сопряжения"><svg viewBox="0 0 20 20"><path d="M5 11L12 4Q15 2 16 5Q17 7 8 15Q4 19 3 15Q3 13 12 5M8 13L14 7"/></svg></button>
            <button class="pal" aria-label="Фильтры"><svg viewBox="0 0 20 20"><path d="M2 2H18L12 9V14H8V9Z" fill="url(#cyan)" stroke="#146"/><circle cx="10" cy="17" r="2" stroke="#c60"/></svg></button>
            <button class="pal" aria-label="Спецификация"><svg viewBox="0 0 20 20"><path d="M3 2H13L17 6V18H3ZM3 6H17M3 10H17M3 14H17M7 2V18M11 2V18M14 6V18" fill="#fff"/></svg></button>
            <button class="pal" aria-label="Отчеты"><svg viewBox="0 0 20 20"><rect x="3" y="2" width="15" height="16" fill="#5c98ec" stroke="#18307c"/><path d="M7 5H16V10H7Z" fill="#d8ecfc" stroke="none"/><path d="M3 3V17" stroke="#112" stroke-width="2" stroke-dasharray="1 1"/></svg></button>
            <button class="pal" aria-label="Обозначения"><svg viewBox="0 0 20 20"><path d="M1 16H15L19 13V16L16 19H1Z" fill="#1c88e0" stroke="none"/><path d="M1 1H7V7H1ZM4 7V15M11 8L14 14L19 5" stroke="#113"/><path d="M2 15L4 12L6 15Z" fill="#113"/></svg></button>
            <i class="pal-sep"></i>
            <button class="pal big" aria-label="Плоскость"><svg viewBox="0 0 24 24"><path d="M1 1V13L11 18M1 1L22 14V24L4 14V8L20 3V12L4 21V14M11 1V23" stroke="#14146a"/></svg></button>
            <button class="pal big" aria-label="Смещённая плоскость"><svg viewBox="0 0 24 24"><path d="M1 11L9 1V9M1 11V23L6 16M1 23H16L24 13M1 17H14"/><path d="M2 16L10 8H24L16 16Z" fill="#30e0f0" stroke="#146"/></svg></button>
            <button class="pal big" aria-label="Локальная СК"><svg viewBox="0 0 24 24"><path d="M12 1V13" stroke="#223"/><path d="M12 13H24" stroke="#2a9a2a"/><path d="M12 13L4 21" stroke="#a55"/><path d="M8 14L12 10H17V14L13 18H8Z" stroke="#556"/></svg></button>
            <button class="pal big" aria-label="Компонент"><svg viewBox="0 0 24 24"><use href="#i-solid"/><path d="M8 16H12V20H8Z"/></svg></button>
            <button class="pal big" aria-label="Зона"><svg viewBox="0 0 24 24"><use href="#i-pane"/></svg></button>
            <button class="pal-cap" aria-label="Развернуть панель"></button>
        </aside>

        <main class="document">
            <div class="doc-tabs">
                <div class="doc-tab">
                    <svg viewBox="0 0 18 18"><path d="M2 2H11V12H17V16H2Z" fill="#f4d8a8"/><circle cx="8" cy="8" r="5" fill="#fff"/><circle cx="8" cy="8" r="2"/></svg>
                    <span class="doc-name"></span>
                    <button class="x" aria-label="Закрыть документ"><svg viewBox="0 0 10 10"><path d="M1 1L9 9M9 1L1 9"/></svg></button>
                </div>
                <button class="doc-list" aria-label="Список документов"></button>
            </div>

            <div class="doc-body">
                <section class="tree-panel">
                    <header class="tree-title">
                        <h2>Дерево модели</h2>
                        <button class="x" aria-label="Закрепить"><svg viewBox="0 0 10 10"><path d="M3 1H8V6M3 1V6M1 6H10M5 6V10" stroke-width="1"/><path d="M7 1V6"/></svg></button>
                        <button class="x" aria-label="Закрыть панель"><svg viewBox="0 0 10 10"><path d="M1 1L9 9M9 1L1 9"/></svg></button>
                    </header>
                    <div class="tree-tools">
                        <button class="tool on" aria-label="Структура модели"><svg viewBox="0 0 24 24"><path d="M5 2V22M5 9H12M12 9V15H18M5 21H9M12 15V19H17"/><path d="M4 1H7V4H4ZM10 7H14V11H10ZM16 12H20V16H16ZM9 19H12V22H9ZM16 18H20V22H16Z" fill="#4ab88a"/></svg></button>
                        <button class="tool" aria-label="Состав дерева"><svg viewBox="0 0 24 24"><path d="M2 2H7M2 2V22H7M2 9H7M2 15H7M9 5L12 8L16 3M9 12L12 15L16 10M9 19L12 22L16 17"/><path d="M18 4H24M18 12H24M18 20H24" stroke="#10108a" stroke-width="2"/></svg></button><button class="caret" aria-label="Список"></button>
                        <i class="sep"></i>
                        <button class="tool" aria-label="Отношения"><svg viewBox="0 0 24 24"><path d="M3 1H17V14H3ZM3 14V23H12L14 21V14M6 4V10M6 5H9M6 10H9M11 4H15M11 7H15M11 10H15" stroke="#14146a"/></svg></button>
                        <button class="tool off" aria-label="Дополнительное окно"><svg viewBox="0 0 24 24"><path d="M1 2H14V18H1ZM4 5V15M4 6H8M4 10H8M4 14H8M10 6H13"/><path d="M11 12H23V22H11Z" fill="#c8ccd0"/><path d="M13 17H21M17 12V22"/><path d="M17 2Q21 3 21 8M18 6L21 9L24 6" stroke-width="2"/></svg></button>
                    </div>
                    <div class="tree-frame">
                        <div class="tree-list">
                            <ul>
                                <li class="root"><svg viewBox="0 0 18 18"><path d="M4 5H11V11H17V16H4Z" fill="#e8a878"/><circle cx="9" cy="10" r="4" fill="#f4d8b8"/><path d="M1 2L4 5L8 1" stroke="#d11" stroke-width="3"/></svg><span class="root-name">(+) -01</span><span>(Тел-0, Сбор</span></li>
                                <li><button class="plus" aria-label="Развернуть"></button><svg viewBox="0 0 18 18"><path d="M4 4L7 2H16V13L13 15H4Z" fill="#a8ecf8" stroke="#1c3ca0"/><path d="M4 4H13V15" stroke="#1c3ca0"/><path d="M4 12L1 17" stroke="#c22"/><path d="M4 13H17" stroke="#2a8"/></svg><span>Системы координат</span></li>
                                <li><button class="plus" aria-label="Развернуть"></button><svg viewBox="0 0 18 18"><path d="M1 2L4 6L9 2M4 5L8 9" stroke="#c11" stroke-width="2"/><path d="M6 6V14H11M6 9H11"/><path d="M11 6H15V10H11ZM12 12H17V16H12Z" fill="#2c6ce0" stroke="#124"/></svg><span>Компоненты</span></li>
                                <li><button class="plus" aria-label="Развернуть"></button><svg viewBox="0 0 18 18"><path d="M4 11L11 3Q14 0 16 3Q18 6 8 15Q4 18 2 15Q1 12 10 4M6 13L14 5" stroke="#14146a"/></svg><span>Сопряжения</span></li>
                            </ul>
                            <div class="hscroll">
                                <button class="arrow left" aria-label="Влево"></button>
                                <div class="thumb"></div>
                                <button class="arrow right" aria-label="Вправо"></button>
                            </div>
                        </div>
                    </div>
                    <nav class="tree-tabs">
                        <a href="#" class="active">Построение</a>
                        <a href="#">Исполнения</a>
                        <a href="#">Зоны</a>
                    </nav>
                </section>

                <section class="view">
                    <svg class="scene" viewBox="251 184 1654 796" preserveAspectRatio="xMidYMid meet">
                        <!-- грунт -->
                        <path d="M600 702L811 605L1180 620L1297 690L1310 697L1337 710L1377 723L1410 745L1433 764L1457 765Q1480 748 1493 762Q1503 775 1513 778L1538 769L1549 773L1215 920L1214 959L600 741Z" fill="#835802" stroke="none"/>
                        <g stroke="none">
                            <path d="M970 832L1247 712L1242 728L1100 796L1010 840L985 850Z" fill="#4e3400" opacity=".35"/>
                            <path d="M990 838L1247 718L1300 700L1285 720L1100 800L1020 838Z" fill="#4e3400" opacity=".25"/>
                            <path d="M1160 905L1300 845L1480 770L1500 775L1300 862L1190 925Z" fill="#5a3c00" opacity=".4"/>
                            <path d="M1205 915L1538 769L1549 773L1215 920Z" fill="#8e6204"/>
                        </g>
                        <path d="M600 702L970 832Q974 846 1001 855Q1050 868 1077 893Q1100 918 1127 913Q1145 895 1163 912Q1190 942 1205 915L1215 920L1214 959L600 741Z" fill="#7b5300"/>
                        <path d="M1215 920L1549 773V812L1214 959Z" fill="#3e2c00"/>
                        <path d="M1205 915L1538 769L1549 773M970 832L1247 712M1157 897L1247 858M1282 842L1373 803M1411 786L1450 768M600 702L811 605M1297 690L1310 697L1337 710L1377 723L1410 745L1433 764H1457Q1480 748 1493 762Q1503 775 1513 778"/>

                        <!-- плиты -->
                        <path d="M757 751L986 653L1000 668L789 762Z" fill="#bdbdbd"/>
                        <path d="M789 762L1000 668V677L789 772Z" fill="#777"/>
                        <path d="M757 751L789 762V772L757 760Z" fill="#cacaca"/>
                        <path d="M935 793L1012 758L1040 762L950 799Z" fill="#bdbdbd"/>
                        <path d="M935 793L950 799V803L935 797Z" fill="#ddd"/>

                        <!-- шпалы и рельсы -->
                        <use href="#slat" x="1179" y="638"/><use href="#slat" x="1159" y="647"/>
                        <use href="#slat" x="1139" y="656"/><use href="#slat" x="1119" y="665"/><use href="#slat" x="1099" y="674"/>
                        <use href="#slat" x="1079" y="683"/><use href="#slat" x="1059" y="692"/><use href="#slat" x="1039" y="701"/>
                        <use href="#slat" x="1019" y="710"/><use href="#slat" x="999" y="719"/><use href="#slat" x="979" y="728"/><use href="#slat" x="959" y="737"/>
                        <path d="M968 747L1230 625M1032 768L1246 674" stroke="#16161a" stroke-width="7"/>
                        <path d="M968 745L1230 623M1032 766L1246 672" stroke="#66707a" stroke-width="2"/>

                        <!-- забор -->
                        <path d="M702 663L812 612L926 632V637L702 735Z" fill="#24180a" fill-opacity=".5" stroke="none"/>
                        <path d="M703 607L780 574L812 560V588L926 632V637L702 735Z" fill="url(#pickets)" stroke="none"/>
                        <path d="M703 616L812 569M778 628L812 612M778 652L812 636" stroke="#a8c0d4" stroke-width="2"/>
                        <path d="M702 669L850 605M702 694L878 616" stroke="#946410" stroke-width="3"/>
                        <path d="M780 572V700M788 570V690" stroke="#000" stroke-width="4"/>

                        <!-- левые трубы и опора -->
                        <path d="M763 350L830 372V412L757 388C742 376 750 350 763 350Z" fill="url(#pipe)"/>
                        <path d="M765 395L830 410V440L745 420C746 404 752 395 765 395Z" fill="url(#pipe)"/>
                        <path d="M723 413L812 438V501L708 465C688 446 702 410 723 413Z" fill="url(#pipe)"/>
                        <path d="M780 505L795 498L812 503V590L782 575Z" fill="#66666a"/>
                        <path d="M784 540L812 552M782 560L812 566M798 500V580" stroke-width="3"/>
                        <path d="M784 552L796 556V568L784 564Z" fill="#bfc2c4"/>
                        <path d="M769 463V510M791 466V545M767 548L783 572" stroke="#050505" stroke-width="5"/>
                        <path d="M765 508L774 502L800 508L784 517Z" fill="#8e8e8e"/>
                        <path d="M765 508L784 517L783 537L765 530Z" fill="#b4b4b4"/>
                        <path d="M784 517L800 508V530L783 537Z" fill="#6e6e6e"/>
                        <path d="M791 505V545" stroke-width="4"/>
                        <text x="766" y="529" class="mark">72</text>
                        <path d="M737 440L803 408L812 412V452L782 467L737 450Z" fill="#5b4e52"/>
                        <path d="M750 442L803 416L812 420V445L782 456Z" fill="#b4ac1c"/>
                        <path d="M765 447L800 430M775 452L810 434" stroke="#f4f060" stroke-width="5"/>
                        <path d="M797 437H803V446H797Z" fill="#f0501c" stroke="none"/>
                        <path d="M820 368L853 361L873 372L830 398Z" fill="#c09814"/>
                        <path d="M833 367L860 378M845 364L868 374" stroke="#e8d040" stroke-width="3"/>
                        <path d="M800 372L843 350L847 356L800 380Z" fill="#5b4e52"/>
                        <path d="M806 408L830 364L847 350M820 412L850 378" stroke-width="4"/>
                        <path d="M812 375L846 388M806 385L840 396M803 395L832 403" stroke-width="4"/>
                        <g class="rail">
                            <path d="M737 397V452L782 467V413L737 397L847 360M737 420L783 438L812 425M783 413L812 403M758 390V436M804 404V454M760 388L800 318L843 300L888 330M780 378L802 343L843 325L863 340M800 318V413M843 300V383M847 335L890 317L928 345M847 360L890 342L910 352M847 335V390M887 330L947 303L993 320L1010 327M887 350L947 330L985 340M890 317V360M886 330V362M923 315V345M947 303V342M993 320V338M737 420L800 392"/>
                        </g>
                        <path d="M993 320Q1014 322 1017 332Q1014 340 996 337M1010 325V345" stroke-width="2"/>

                        <!-- здание -->
                        <path d="M1121 525L1208 465L1297 447V620L1119 697Z" fill="#808080"/>
                        <path d="M813 417L1121 525V697L811 588Z" fill="#dedede"/>
                        <path d="M902 357L990 338L1297 447L1208 465Z" fill="#dedede"/>
                        <path d="M813 417L902 357L1208 465L1121 525Z" fill="#fff"/>
                        <path d="M813 417L902 357L990 338" stroke="#111" stroke-width="5"/>
                        <path d="M815 415L902 356L988 338" stroke="#777" stroke-width="2"/>
                        <g class="seam">
                            <path d="M858 387L1164 495M865 435L950 374M917 453L1001 392M968 471L1051 410M1020 489L1105 428M1071 507L1160 446M946 347L1252 456M950 374L1039 356M1001 392L1090 374M1051 410L1140 392M1105 428L1194 410M1160 446L1244 428M990 338L1297 447"/>
                            <path d="M832 424V493M873 439V507M914 453V522M956 468V537M996 482V551M1039 500V550M1079 515V562M863 505V607M903 520V621M943 534V635M982 548V649"/>
                            <path d="M813 487L1000 553M996 532L1117 577M1078 582L1117 595"/>
                            <path d="M1169 500V672M1213 485V560M1256 468V560M1126 568L1167 550M1213 530L1296 495M1169 588L1195 578"/>
                        </g>
                        <path d="M902 357L1208 465" stroke-width="6"/>
                        <path d="M813 419L1121 527" stroke-width="4"/><path d="M813 420L1121 528" stroke="#eee"/>
                        <path d="M1121 525L1208 467L1297 449L1292 456L1208 490L1128 528Z" fill="#777"/>
                        <path d="M1128 524L1208 472L1290 453" stroke="#aaa"/>
                        <path d="M1208 467V488M1156 514L1168 505V497M1172 497L1187 500V483M1190 481L1207 487L1228 468V481L1249 463V472L1268 459M1125 530L1295 458" stroke-width="2"/>
                        <path d="M1122 527V697M1119 527V697M1296 450V560" stroke-width="3"/><path d="M1125 528V694" stroke="#555"/>
                        <path d="M812 417V590M810 589L1119 699L1297 618" stroke-width="5"/><path d="M812 590L1118 697" stroke="#776a6c"/>

                        <!-- сетчатые кольца -->
                        <path d="M950 497Q930 485 922 503Q908 535 932 541M993 513Q975 505 967 520Q955 552 980 558" stroke="#888" stroke-width="8" stroke-dasharray="2 1"/>
                        <path d="M950 494Q930 482 920 503Q905 535 932 544M993 510Q975 502 964 520Q952 552 980 561" stroke="#666"/>
                        <path d="M990 468H1000M992 473H998M1034 488H1044" stroke="#777" stroke-width="3" stroke-dasharray="1 1"/>

                        <!-- вход, навес, стойки -->
                        <path d="M1035 595L1067 590V690L1035 675Z" fill="#7a7a7a"/>
                        <path d="M992 580V690M999 580V675M1035 590V680M1041 595V680M1067 585V690M1035 622L1067 633" stroke-width="3"/>
                        <path d="M1022 542L1092 567L1053 598L985 573Z" fill="#fff"/>
                        <path d="M1003 560L1069 583M985 574L1053 598" stroke-width="3"/>
                        <path d="M1034 577V585" stroke="#777" stroke-width="3"/>
                        <path d="M995 670L1026 658L1074 680L1039 700L992 688Z" fill="#15110f"/>
                        <path d="M996 672L1012 665L1020 670L1004 678Z" fill="#555"/>
                        <path d="M992 684L1040 700" stroke="#6e6064" stroke-width="5"/>
                        <path d="M994 628L1026 614V655M994 628L1046 650M994 628V672M1010 621V662M1046 650L1060 690M1074 640L1080 634V684L1074 690ZM1074 660L1080 656" stroke-width="2"/>
                        <path d="M1080 640L1090 680L1130 790M1130 770V840M1046 650L1130 800M1046 650L1060 700" stroke-dasharray="3 2"/>
                        <path d="M952 645H960V792H952Z" fill="#7a78a8"/><path d="M956 645V792"/>
                        <path d="M1012 697H1018V765H1012ZM1160 682H1166V700H1160Z" fill="#7c7ab0"/>
                        <path d="M989 686H993L990 843H986Z" fill="#7a6a6c"/><path d="M980 843L992 846L996 842Z" fill="#555"/>
                        <path d="M1038 690H1045V862H1037Z" fill="#5c5456"/><path d="M1031 861L1041 865L1048 860Z" fill="#555"/>
                        <path d="M1060 690L1139 905" stroke="#0a0a0c" stroke-width="34" stroke-dasharray="8 7"/>
                        <path d="M1045 700L1123 913M1076 688L1154 898M1123 913L1154 900" stroke="#08080a" stroke-width="6"/>
                        <path d="M1045 700L1123 911M1076 688L1154 897" stroke="#77777c"/>

                        <!-- опора 71 -->
                        <path d="M1167 677L1180 670L1269 700V716Z" fill="#6a5c60"/>
                        <path d="M1167 677L1269 716" stroke-width="3"/>
                        <path d="M1283 690L1303 680V688L1283 700Z" fill="#777"/>
                        <path d="M1249 733L1268 736L1265 863L1247 858Z" fill="#a9a9a9"/>
                        <path d="M1268 736L1283 728L1281 857L1265 863Z" fill="#696969"/>
                        <path d="M1250 712L1267 717L1283 660V728L1268 736L1249 730Z" fill="#7e7a7c"/>
                        <path d="M1268 670V736M1283 660V728M1250 714L1268 720L1284 712M1250 712V732M1268 705L1284 697" stroke-width="2"/>
                        <path d="M1252 716L1265 720V731L1252 728Z" fill="#b0b0b0"/>
                        <path d="M1234 677L1258 667L1274 672L1253 681Z" fill="#b0b0b0"/>
                        <path d="M1234 677L1253 681V705L1234 698Z" fill="#a2a2a2"/>
                        <path d="M1253 681L1270 673V700L1253 705Z" fill="#777"/>
                        <text x="1235" y="697" class="mark">71</text>

                        <!-- дальняя опора -->
                        <path d="M1377 642H1395V806L1375 802Z" fill="#a9a9a9"/>
                        <path d="M1395 642H1411L1408 799L1393 806Z" fill="#696969"/>
                        <path d="M1378 660L1396 665L1411 658M1377 673L1396 679L1411 672M1396 640V679" stroke-width="2"/>

                        <!-- лестница с ограждением -->
                        <path d="M1432 628L1457 618M1432 643L1457 633M1432 658L1457 648M1432 673L1457 663M1432 688L1457 678M1432 703L1457 693M1432 718L1457 708M1432 733L1457 723M1432 748L1457 738M1432 763L1457 753M1432 783L1457 775" stroke-width="2"/>
                        <path d="M1432 590L1429 800M1457 532L1454 788M1480 493L1477 667" stroke="#0a0a08" stroke-width="4"/>
                        <path d="M1448 520V675M1468 500V672" stroke-width="2"/>
                        <g class="cage">
                            <path d="M1436 512Q1462 528 1482 518Q1490 506 1470 498M1440 536Q1462 550 1482 543Q1490 534 1475 527M1440 562Q1462 576 1481 569Q1490 560 1475 553M1440 588Q1462 602 1481 595Q1490 586 1475 579M1433 614Q1462 628 1481 621Q1490 612 1475 605M1433 638Q1458 652 1480 645Q1490 636 1472 629L1433 638M1433 658Q1458 670 1480 664Q1490 656 1472 649L1433 658M1433 676Q1456 686 1478 680Q1490 672 1472 665L1433 676"/>
                        </g>

                        <!-- площадка справа -->
                        <path d="M1296 525L1350 545L1330 575L1271 562V550Z" fill="#fbf8ac"/>
                        <path d="M1406 567L1464 585L1453 621L1385 600Z" fill="url(#pipe)"/>
                        <ellipse cx="1459" cy="603" rx="12" ry="18" fill="#8b8556"/><ellipse cx="1459" cy="603" rx="9" ry="14" fill="url(#bore)"/>
                        <path d="M1356 575L1424 599L1410 645L1340 620Z" fill="url(#pipe)"/>
                        <ellipse cx="1416" cy="622" rx="15" ry="24" fill="#8b8556"/><ellipse cx="1416" cy="622" rx="12" ry="19" fill="url(#bore)"/>
                        <path d="M1294 570L1415 517L1460 532V540L1339 593Z" fill="#544649"/>
                        <path d="M1308 571L1415 525L1448 534L1336 583Z" fill="#d6d42c"/>
                        <path d="M1320 575L1425 529M1355 553L1378 563M1392 537L1412 546M1372 550V562M1402 538V550" stroke="#8e8a10" stroke-width="3"/>
                        <g class="rail">
                            <path d="M1269 537L1415 472L1480 493M1269 537L1314 553L1435 500L1460 508M1269 560L1415 497L1460 510M1269 560L1314 577L1435 522M1269 537V562M1314 553V578M1312 518V560M1355 498V572M1391 482V530M1415 472V520M1400 517V562M1435 500V548M1358 534V575M1462 488V532M1450 505V538"/>
                        </g>

                        <!-- передние трубы -->
                        <path d="M1320 590L1385 613L1367 665L1300 640Z" fill="url(#pipe)"/>
                        <ellipse cx="1374" cy="639" rx="17" ry="27" fill="#8b8556"/><ellipse cx="1374" cy="639" rx="14" ry="21" fill="url(#bore)"/>
                        <path d="M1189 583L1341 634L1323 685L1180 633C1164 620 1174 580 1189 583Z" fill="url(#pipe)"/>
                        <ellipse cx="1332" cy="659" rx="17" ry="26" fill="#8b8556"/><ellipse cx="1332" cy="659" rx="14" ry="21" fill="url(#bore)"/>
                        <path d="M1192 538L1339 590L1328 626L1183 575C1174 562 1178 536 1192 538Z" fill="url(#pipe)"/>
                        <ellipse cx="1334" cy="608" rx="13" ry="18" fill="#1c4a80"/><ellipse cx="1334" cy="608" rx="10" ry="14" fill="url(#bore)"/>
                        <path d="M1200 560L1192 575" stroke="#776" stroke-width="3" stroke-dasharray="2 1"/>

                        <!-- оси координат -->
                        <path d="M319 904V874H317L321 861L325 874H323V904Z" fill="#74c98c" stroke="#3c8c58"/>
                        <path d="M326 909L350 917L351 914L363 924L347 922L348 920L325 913Z" fill="#e86a6a" stroke="#b84040"/>
                        <path d="M316 909L297 917L296 915L286 925L300 924L299 921L317 913Z" fill="#4a78d4" stroke="#2c509c"/>
                        <circle cx="321" cy="909" r="7" fill="#f4ec60" stroke="#b4a840"/>
                        <text x="317" y="855" class="axis" fill="#4c8c64">Y</text>
                        <text x="364" y="931" class="axis" fill="#c45454">X</text>
                        <text x="275" y="932" class="axis" fill="#5c7cac">Z</text>
                    </svg>
                </section>
            </div>
        </main>
    </div>

    <div class="properties">
        <i class="grip"></i>
        <input type="text" aria-label="Панель свойств">
    </div>

    <footer class="status">
        <span class="status-text">Показать документ полностью</span>
        <span class="cell"></span>
        <span class="cell small"></span>
        <span class="watermark">user-life.com</span>
    </footer>
</div>

</body>
</html>
```

FILE: styles.css
```css
* {
    box-sizing: border-box;
}
body {
    margin: 0;
    height: 100vh;
    padding: 2px 3px 3px 2px;
    display: flex;
    background: linear-gradient(#1d3768, #3d5a80 20%, #57616b 60%, #55584c);
    font-family: "Open Sans", "Noto Sans", sans-serif;
    font-size: 11px;
    line-height: 16px;
    color: #2c3238;
    overflow: hidden;
}
button {
    padding: 0;
    border: 0;
    background: none;
    font: inherit;
    color: inherit;
}
a {
    color: inherit;
    text-decoration: none;
}
h1, h2 {
    margin: 0;
    font-size: 11px;
    font-weight: normal;
}
svg {
    display: block;
    fill: none;
    stroke: #111;
    stroke-width: 1;
}
.defs {
    position: absolute;
}
.window {
    flex: 1;
    min-width: 0;
    display: flex;
    flex-direction: column;
    background: #e0e4e6;
    border: 1px solid #fff;
    border-radius: 6px;
    padding: 0 6px 4px 6px;
}

/* заголовок и меню */
.titlebar {
    display: flex;
    align-items: center;
    height: 32px;
    margin: 0 -6px;
    padding: 0 12px 0 7px;
    background: linear-gradient(#d6dbdf, #cad2d9);
    border-radius: 6px 6px 0 0;
}
.titlebar h1 {
    flex: 1;
    padding-left: 584px;
    font-size: 12px;
    font-family: Roboto, sans-serif;
    color: #3c444c;
}
.logo {
    width: 18px;
    height: 18px;
}
.window-buttons {
    display: flex;
    gap: 11px;
}
.window-buttons svg {
    width: 12px;
    height: 12px;
    stroke: #555c66;
}
.menu {
    display: flex;
    align-items: center;
    gap: 15px;
    height: 21px;
    padding-left: 16px;
    font-family: Roboto, sans-serif;
    white-space: nowrap;
}
.menu u {
    text-underline-offset: 2px;
}

/* панели инструментов */
.toolbar-row {
    display: flex;
    height: 34px;
    gap: 2px;
}
.toolbar {
    display: flex;
    align-items: center;
    height: 33px;
    background: linear-gradient(#fdfdfe, #f6f7f9 50%, #e6e8ee);
    border-bottom: 1px solid #9a9ea4;
    border-radius: 4px;
}
.toolbar-library {
    margin-left: 305px;
}
.grip {
    width: 12px;
    height: 24px;
    background: radial-gradient(circle, #a4a8ae 1px, transparent 1px) 0 0 / 8px 4px repeat-y;
}
.tool {
    width: 30px;
    height: 30px;
    display: flex;
    align-items: center;
    justify-content: center;
}
.tool svg {
    width: 24px;
    height: 24px;
}
.tool.off svg {
    stroke: #a0a4a8;
}
.tool.ghost svg {
    stroke: #dcdfe2;
}
.tool.dim svg {
    stroke: #7f8690;
    fill: #f0f2f6;
}
.tool.hover {
    background: #fbf0b4;
    border: 1px solid #e8d898;
}
.tool.on, .pair.on {
    background: #fbdc7a;
    border: 1px solid #d2ac4e;
    border-radius: 2px;
}
.pair {
    display: flex;
    height: 30px;
    align-items: center;
}
.fx {
    font-size: 17px;
    color: #10108a;
}
.sep {
    width: 8px;
    height: 22px;
    background: linear-gradient(#a8acb2, #a8acb2) center / 1px 100% no-repeat;
}
.caret {
    width: 13px;
    height: 28px;
    display: flex;
    align-items: center;
    justify-content: center;
}
.caret::before, .doc-list::before {
    content: "";
    border: 3px solid transparent;
    border-top: 4px solid #111;
    border-bottom: 0;
}
.caret.off::before {
    border-top-color: #999;
}
.cap {
    align-self: stretch;
    width: 10px;
    display: flex;
    align-items: flex-end;
    justify-content: center;
    padding-bottom: 3px;
    background: linear-gradient(#b4b8bd, #7f848a);
    border-radius: 0 4px 4px 0;
}
.cap::before {
    content: "";
    width: 8px;
    height: 6px;
    border-top: 1px solid #111;
    background: linear-gradient(#111, #111) center 2px / 4px 2px no-repeat, linear-gradient(#111, #111) center 4px / 2px 2px no-repeat;
}
.combo {
    display: flex;
    position: relative;
    height: 21px;
    margin-right: 3px;
    border: 1px solid #8d9298;
    background: #fff;
}
.combo select {
    appearance: none;
    width: 100%;
    padding: 0 15px 0 4px;
    border: 0;
    background: none;
    font: inherit;
    color: #222;
}
.combo::after {
    content: "";
    position: absolute;
    right: 0;
    top: 0;
    width: 15px;
    height: 19px;
    border: 1px solid #9a9ea4;
    background: #e6e8ea;
    pointer-events: none;
}
.combo::before {
    content: "";
    position: absolute;
    z-index: 1;
    right: 4px;
    top: 8px;
    border: 4px solid transparent;
    border-top: 5px solid #111;
    border-bottom: 0;
    pointer-events: none;
}
.combo-scale { width: 66px; }
.combo-step { width: 58px; }
.combo-layer { width: 126px; }
.combo-part { width: 126px; }
.combo-full { width: 114px; }

/* рабочая область */
.workspace {
    flex: 1;
    min-height: 0;
    display: flex;
    gap: 1px;
}
.palette {
    width: 33px;
    align-self: flex-start;
    margin-top: 36px;
    padding-top: 4px;
    display: flex;
    flex-direction: column;
    align-items: center;
    background: linear-gradient(90deg, #fdfdfe, #e9ebef);
    border-top: 2px dotted #b4b8bc;
}
.pal {
    width: 33px;
    height: 23px;
    padding-left: 8px;
    display: flex;
    align-items: center;
    justify-content: center;
    background: radial-gradient(circle, #b4b8bc 1px, transparent 1px) 0 0 / 6px 5px repeat-y;
}
.pal svg {
    width: 20px;
    height: 20px;
}
.pal.on svg {
    width: 22px;
    height: 22px;
    padding: 1px;
    background: #fbe98c;
    outline: 1px solid #8e9cb0;
}
.pal.big {
    height: 30px;
    padding: 0;
    background: none;
}
.pal.big svg {
    width: 24px;
    height: 24px;
}
.pal-sep {
    width: 18px;
    height: 1px;
    margin: 3px 0 4px;
    background: #999;
}
.pal-cap {
    width: 33px;
    height: 11px;
    background: linear-gradient(90deg, #8a8e94, #d0d3d8);
    display: flex;
    align-items: center;
    justify-content: flex-end;
    padding-right: 3px;
}
.pal-cap::before {
    content: "";
    border: 4px solid transparent;
    border-left: 4px solid #111;
    border-right: 0;
}
.document {
    flex: 1;
    min-width: 0;
    display: flex;
    flex-direction: column;
    border: 1px solid #9aa3ae;
    background: #dfe4e8;
}
.doc-tabs {
    display: flex;
    align-items: flex-end;
    justify-content: space-between;
    height: 23px;
    padding-right: 4px;
    background: linear-gradient(#e6eaec, #fff);
    border-bottom: 1px solid #a0a4a8;
}
.doc-tab {
    display: flex;
    align-items: center;
    height: 21px;
    width: 137px;
    padding: 0 4px 0 24px;
    background: linear-gradient(#fff, #c8d8f8);
    border-right: 1px solid #7e8896;
    border-top: 1px solid #7e8896;
    clip-path: polygon(20px 0, 100% 0, 100% 100%, 0 100%);
}
.doc-tab > svg {
    width: 18px;
    height: 17px;
}
.doc-name {
    width: 50px;
    margin: 0 auto;
    border-top: 1px dashed #333;
}
.x {
    width: 16px;
    height: 16px;
    display: flex;
    align-items: center;
    justify-content: center;
}
.x svg {
    width: 9px;
    height: 9px;
    stroke-width: 2;
}
.doc-list {
    width: 16px;
    height: 22px;
}
.doc-list::before {
    display: block;
    margin: 0 auto;
    width: 0;
    border-width: 5px;
    border-top-width: 6px;
}
.doc-body {
    flex: 1;
    min-height: 0;
    display: flex;
    gap: 5px;
    padding: 0 3px 3px 2px;
}
.tree-panel {
    width: 200px;
    display: flex;
    flex-direction: column;
}
.tree-title {
    display: flex;
    align-items: center;
    gap: 1px;
    height: 19px;
    padding: 0 2px 0 3px;
    background: #bcc9d6;
}
.tree-title h2 {
    flex: 1;
    color: #566878;
}
.tree-tools {
    display: flex;
    align-items: center;
    height: 33px;
    padding-left: 2px;
    background: linear-gradient(#fdfdfe, #eceef2);
}
.tree-tools .sep {
    width: 14px;
}
.tree-frame {
    flex: 1;
    min-height: 0;
    display: flex;
    padding: 3px;
    border: 1px solid #8a9098;
    background: #f0f0f0;
}
.tree-list {
    flex: 1;
    min-width: 0;
    display: flex;
    flex-direction: column;
    justify-content: space-between;
    padding: 1px;
    border: 1px solid #8a9098;
    background: #fff;
}
.tree-list ul {
    margin: 0;
    padding: 0;
    list-style: none;
    overflow: hidden;
    font-family: Roboto, sans-serif;
    font-size: 12px;
    color: #1c1c1c;
}
.tree-list li {
    display: flex;
    align-items: center;
    height: 20px;
    padding-left: 9px;
    white-space: nowrap;
}
.tree-list .root {
    padding-left: 3px;
}
.tree-list li svg {
    width: 18px;
    height: 18px;
    margin-right: 6px;
    flex: none;
}
.root-name {
    width: 93px;
    flex: none;
}
.plus {
    width: 9px;
    height: 9px;
    margin-right: 9px;
    border: 1px solid #8a8f96;
    background: linear-gradient(#224, #224) center / 5px 1px no-repeat, linear-gradient(#224, #224) center / 1px 5px no-repeat;
    flex: none;
}
.hscroll {
    display: flex;
    align-items: center;
    height: 17px;
    background: #eeeff1;
}
.arrow {
    width: 19px;
    height: 16px;
    display: flex;
    align-items: center;
    justify-content: center;
}
.arrow::before {
    content: "";
    border: 4px solid transparent;
}
.arrow.left::before {
    border-right-color: #111;
    border-left: 0;
}
.arrow.right {
    margin-left: auto;
}
.arrow.right::before {
    border-left-color: #111;
    border-right: 0;
}
.thumb {
    width: 80px;
    height: 15px;
    border: 1px solid #85898e;
    border-radius: 2px;
    background: repeating-linear-gradient(90deg, #444 0 1px, transparent 1px 3px) center / 8px 6px no-repeat, linear-gradient(#f6f6f7, #c0c3c8);
}
.tree-tabs {
    display: flex;
    height: 18px;
    padding-left: 2px;
    font-family: Roboto, sans-serif;
}
.tree-tabs a {
    padding: 0 8px;
    white-space: nowrap;
}
.tree-tabs .active {
    padding: 0 4px;
    background: #fff;
    border: 1px solid #b4babf;
    border-top: 0;
    border-radius: 0 0 3px 3px;
}
.view {
    flex: 1;
    min-width: 0;
    border-left: 1px solid #50565e;
    border-top: 1px solid #6a7078;
    background: linear-gradient(#69a4e1, #7ab0e4 12%, #aacdf0 50%, #dde9fa 70%, #f6faff 88%, #fff);
}
.scene {
    width: 100%;
    height: 100%;
}
.seam {
    stroke-width: 3;
}
.rail {
    stroke: #0b0b10;
    stroke-width: 3;
}
.cage {
    stroke: #14140a;
    stroke-width: 2;
}
.mark {
    font: 16px "Liberation Sans", sans-serif;
    fill: #111;
    stroke: none;
}
.axis {
    font: 13px "Liberation Sans", sans-serif;
    stroke: none;
}

/* панель свойств и строка состояния */
.properties {
    display: flex;
    height: 67px;
    padding: 7px 6px 0 33px;
}
.properties .grip {
    width: 7px;
    height: 56px;
}
.properties input {
    flex: 1;
    height: 35px;
    border: 1px solid #8a9098;
    border-bottom-color: #555b62;
    background: linear-gradient(#fff, #f2f5f7);
}
.status {
    display: flex;
    align-items: center;
    position: relative;
    height: 20px;
    border-top: 1px solid #8e959d;
    background: linear-gradient(#dcdfe6, #c6cad2);
}
.status-text {
    flex: 1;
    padding-left: 5px;
    font-family: Roboto, sans-serif;
    font-size: 12px;
}
.cell {
    width: 86px;
    height: 16px;
    border-left: 1px solid #7e858d;
}
.cell.small {
    width: 18px;
}
.watermark {
    position: absolute;
    right: 4px;
    bottom: -1px;
    font-size: 18px;
    line-height: 24px;
    font-weight: bold;
    color: #e6e7ea;
    text-shadow: 0 0 2px #777, 1px 1px 2px #888;
}
```
